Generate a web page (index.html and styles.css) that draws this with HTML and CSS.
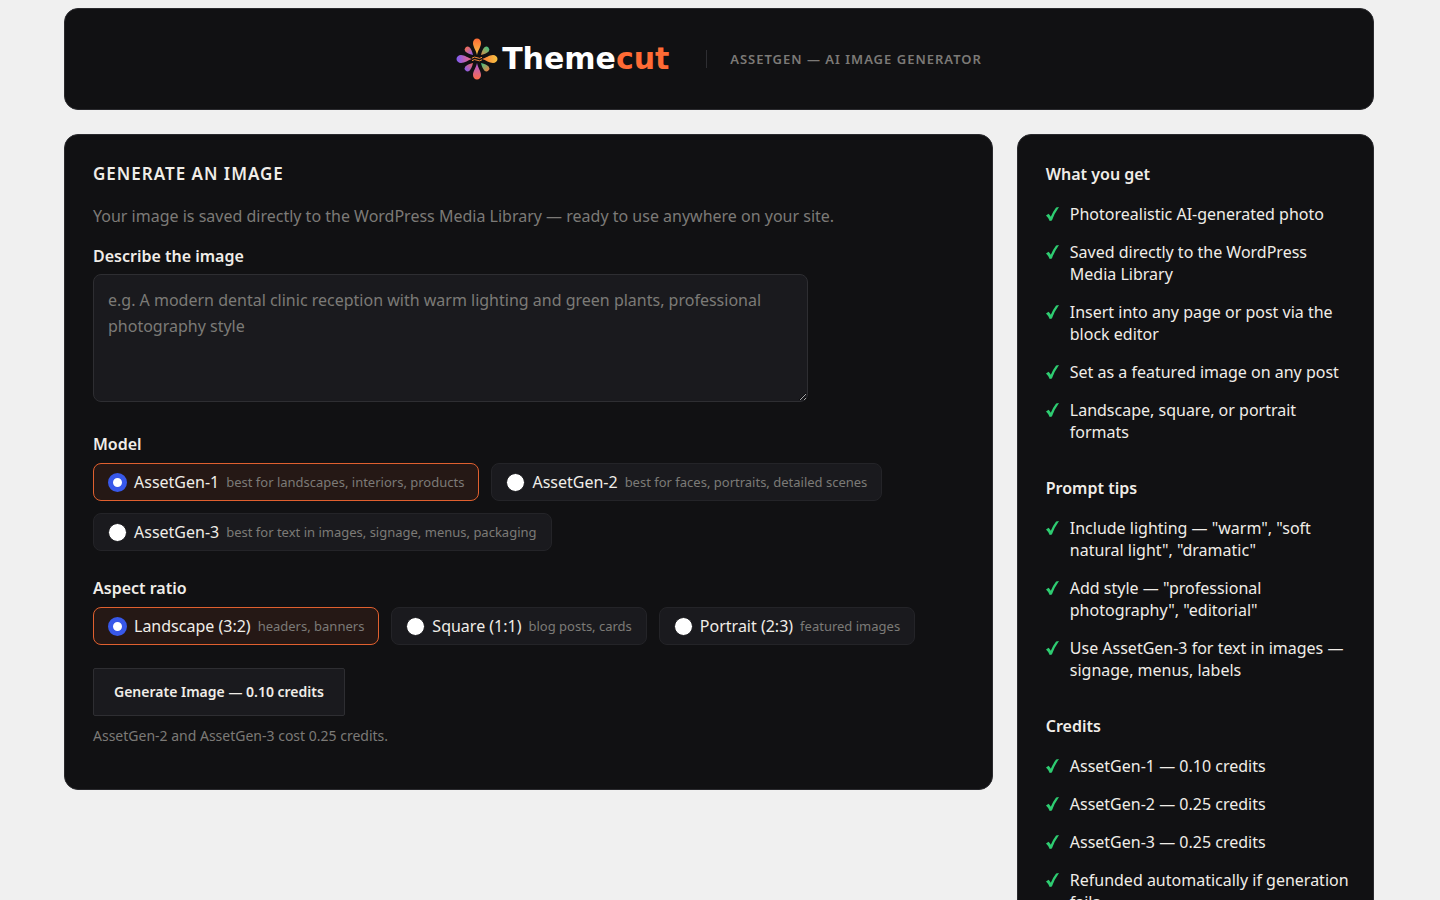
FILE: index.html
```html
<!DOCTYPE html>
<html lang="en">
<head>
    <meta charset="UTF-8">
    <meta name="viewport" content="width=device-width, initial-scale=1.0">
    <title>AssetGen — AI Image Generator</title>
    <link rel="stylesheet" href="styles.css">
</head>
<body>
    <svg class="sprite" aria-hidden="true">
        <symbol id="check" viewBox="0 0 13 14">
            <path d="M0 8.500 L2.600 6.700 Q4 8.200 4.800 9.800 Q7.200 4.300 10.100 0.600 L13 0 Q8.400 6.400 5.900 13.400 L3.700 14 Q2.400 10.600 0 8.500 Z" fill="currentColor"/>
        </symbol>
    </svg>

    <div class="page">
        <header class="card header">
            <div class="brand">
                <svg class="brand-mark" viewBox="0 0 42 42" aria-hidden="true">
                    <defs>
                        <linearGradient id="top" x1="0" y1="0" x2="0" y2="1"><stop offset="0" stop-color="#ff6b35"/><stop offset="1" stop-color="#f7c548"/></linearGradient>
                        <linearGradient id="right" x1="0" y1="0" x2="1" y2="0"><stop offset="0" stop-color="#ff7a38"/><stop offset="1" stop-color="#f5c342"/></linearGradient>
                        <linearGradient id="bottom" x1="0" y1="0" x2="0" y2="1"><stop offset="0" stop-color="#a85be0"/><stop offset="1" stop-color="#ff6b45"/></linearGradient>
                        <linearGradient id="left" x1="0" y1="0" x2="1" y2="0"><stop offset="0" stop-color="#7f5cf5"/><stop offset="1" stop-color="#f0697a"/></linearGradient>
                        <linearGradient id="green" x1="1" y1="0" x2="0" y2="1"><stop offset="0" stop-color="#35c987"/><stop offset="1" stop-color="#e08a45"/></linearGradient>
                        <linearGradient id="violet" x1="0" y1="0" x2="1" y2="1"><stop offset="0" stop-color="#ff7040"/><stop offset="1" stop-color="#8a5cf0"/></linearGradient>
                        <linearGradient id="plum" x1="0" y1="1" x2="1" y2="0"><stop offset="0" stop-color="#7f5cf5"/><stop offset="1" stop-color="#ef6a60"/></linearGradient>
                        <linearGradient id="moss" x1="0" y1="0" x2="1" y2="1"><stop offset="0" stop-color="#35c987"/><stop offset="1" stop-color="#ff7a3c"/></linearGradient>
                    </defs>
                    <path fill="url(#top)" d="M21 17 C20 12 17 9 17 5 A4 4.5 0 0 1 25 5 C25 9 22 12 21 17Z"/>
                    <path fill="url(#bottom)" d="M21 25 C20 30 17 33 17 37 A4 4.5 0 0 0 25 37 C25 33 22 30 21 25Z"/>
                    <path fill="url(#left)" d="M16 21 C12 22 9 25 5 25 A4.5 4 0 0 1 5 17 C9 17 12 20 16 21Z"/>
                    <path fill="url(#right)" d="M26 21 C30 22 33 25 37 25 A4.5 4 0 0 0 37 17 C33 17 30 20 26 21Z"/>
                    <path fill="url(#violet)" d="M17 17 C16 13 15 11 13.500 9.300 A3 3 0 0 0 9.300 13.500 C11 15 13 16 17 17Z"/>
                    <path fill="url(#green)" d="M25 17 C26 13 27 11 28.500 9.300 A3 3 0 0 1 32.700 13.500 C31 15 29 16 25 17Z"/>
                    <path fill="url(#plum)" d="M17 25 C13 26 11 27 9.300 28.500 A3 3 0 0 0 13.500 32.700 C15 31 16 29 17 25Z"/>
                    <path fill="url(#moss)" d="M25 25 C29 26 31 27 32.700 28.500 A3 3 0 0 1 28.500 32.700 C27 31 26 29 25 25Z"/>
                    <path fill="none" stroke="#f08a3c" stroke-width="1" d="M16 20.200 Q18.500 18.200 21 19.700 T26 19.300 M16 22.700 Q18.500 20.700 21 22.200 T26 21.800"/>
                </svg>
                <span class="brand-name">Theme<span class="accent">cut</span></span>
            </div>
            <span class="tagline">AssetGen — AI Image Generator</span>
        </header>

        <div class="columns">
            <main class="card">
                <h1 class="title">Generate an image</h1>
                <p class="intro">Your image is saved directly to the WordPress Media Library — ready to use anywhere on your site.</p>

                <form>
                    <label class="field-label" for="prompt">Describe the image</label>
                    <textarea class="prompt" id="prompt" placeholder="e.g. A modern dental clinic reception with warm lighting and green plants, professional photography style"></textarea>

                    <fieldset class="group">
                        <legend class="field-label">Model</legend>
                        <div class="options">
                            <label class="option">
                                <input type="radio" name="model" value="1" checked>
                                <span>AssetGen-1</span>
                                <small>best for landscapes, interiors, products</small>
                            </label>
                            <label class="option">
                                <input type="radio" name="model" value="2">
                                <span>AssetGen-2</span>
                                <small>best for faces, portraits, detailed scenes</small>
                            </label>
                            <label class="option">
                                <input type="radio" name="model" value="3">
                                <span>AssetGen-3</span>
                                <small>best for text in images, signage, menus, packaging</small>
                            </label>
                        </div>
                    </fieldset>

                    <fieldset class="group">
                        <legend class="field-label">Aspect ratio</legend>
                        <div class="options">
                            <label class="option">
                                <input type="radio" name="ratio" value="3:2" checked>
                                <span>Landscape (3:2)</span>
                                <small>headers, banners</small>
                            </label>
                            <label class="option">
                                <input type="radio" name="ratio" value="1:1">
                                <span>Square (1:1)</span>
                                <small>blog posts, cards</small>
                            </label>
                            <label class="option">
                                <input type="radio" name="ratio" value="2:3">
                                <span>Portrait (2:3)</span>
                                <small>featured images</small>
                            </label>
                        </div>
                    </fieldset>

                    <button class="submit" type="submit">Generate Image — 0.10 credits</button>
                    <p class="note">AssetGen-2 and AssetGen-3 cost 0.25 credits.</p>
                </form>
            </main>

            <aside class="card sidebar">
                <h2>What you get</h2>
                <ul>
                    <li><svg><use href="#check"/></svg>Photorealistic AI-generated photo</li>
                    <li><svg><use href="#check"/></svg>Saved directly to the WordPress Media Library</li>
                    <li><svg><use href="#check"/></svg>Insert into any page or post via the block editor</li>
                    <li><svg><use href="#check"/></svg>Set as a featured image on any post</li>
                    <li><svg><use href="#check"/></svg>Landscape, square, or portrait formats</li>
                </ul>

                <h2>Prompt tips</h2>
                <ul>
                    <li><svg><use href="#check"/></svg>Include lighting — "warm", "soft natural light", "dramatic"</li>
                    <li><svg><use href="#check"/></svg>Add style — "professional photography", "editorial"</li>
                    <li><svg><use href="#check"/></svg>Use AssetGen-3 for text in images — signage, menus, labels</li>
                </ul>

                <h2>Credits</h2>
                <ul>
                    <li><svg><use href="#check"/></svg>AssetGen-1 — 0.10 credits</li>
                    <li><svg><use href="#check"/></svg>AssetGen-2 — 0.25 credits</li>
                    <li><svg><use href="#check"/></svg>AssetGen-3 — 0.25 credits</li>
                    <li><svg><use href="#check"/></svg>Refunded automatically if generation fails</li>
                </ul>
            </aside>
        </div>
    </div>
</body>
</html>
```

FILE: styles.css
```css
*, *::before, *::after {
    box-sizing: border-box;
}

html {
    scrollbar-width: none;
}

body {
    margin: 0;
    background: #f0f0f0;
    color: #f0ede8;
    font-family: "Segoe UI", "Noto Sans", sans-serif;
    font-size: 16px;
    line-height: 22px;
}

.sprite {
    display: none;
}

.page {
    padding: 8px 66px 24px 64px;
}

.card {
    background: #111113;
    border: 1px solid #2a2a2e;
    border-radius: 14px;
    padding: 28px;
}

/* Header */
.header {
    display: flex;
    justify-content: center;
    align-items: center;
    gap: 24px;
    margin-bottom: 24px;
}

.brand {
    display: flex;
    align-items: center;
    gap: 4px;
    height: 44px;
}

.brand-mark {
    width: 42px;
    height: 42px;
}

.brand-name {
    width: 180px;
    color: #fff;
    font-family: "DejaVu Sans", sans-serif;
    font-size: 30px;
    font-weight: 700;
}

.accent {
    color: #ff6b35;
}

.tagline {
    border-left: 1px solid #2e2e32;
    padding-left: 23px;
    color: #7c7a77;
    font-size: 13px;
    font-weight: 600;
    line-height: 18px;
    letter-spacing: 1px;
    text-transform: uppercase;
}

/* Layout */
.columns {
    display: grid;
    grid-template-columns: 13fr 5fr;
    align-items: start;
    gap: 24px;
}

/* Form */
.title {
    margin: 0 0 20px;
    font-size: 17px;
    font-weight: 600;
    letter-spacing: 1px;
    text-transform: uppercase;
}

.intro {
    margin: 0 0 18px;
    color: #7c7a77;
}

.field-label {
    display: block;
    margin-bottom: 7px;
    padding: 0;
    font-weight: 600;
}

.prompt {
    display: block;
    width: 100%;
    max-width: 715px;
    height: 128px;
    padding: 12px 14px;
    background: #1a1a1e;
    border: 1px solid #2e2e32;
    border-radius: 8px;
    color: #f0ede8;
    font: inherit;
    line-height: 26px;
    resize: vertical;
}

.prompt::placeholder {
    color: #7c7a77;
}

.group {
    min-width: 0;
    margin: 31px 0 0;
    padding: 0;
    border: 0;
}

.group + .group {
    margin-top: 26px;
}

.group .field-label {
    margin-bottom: 8px;
}

.options {
    display: flex;
    flex-wrap: wrap;
    gap: 12px;
}

.option {
    display: flex;
    align-items: center;
    gap: 7px;
    height: 38px;
    padding: 0 14px;
    background: #1a1a1e;
    border: 1px solid #242428;
    border-radius: 8px;
    cursor: pointer;
}

.option:has(input:checked) {
    background: #251815;
    border-color: #e0602f;
}

.option input {
    appearance: none;
    width: 19px;
    height: 19px;
    margin: 0;
    background: #fff;
    border: 1px solid #1a1a1e;
    border-radius: 50%;
}

.option input:checked {
    border: 5px solid #3858e9;
}

.option small {
    color: #7c7a77;
    font-size: 13px;
}

.submit {
    display: block;
    height: 48px;
    margin-top: 23px;
    padding: 0 20px;
    background: #1a1a1e;
    border: 1px solid #2e2e32;
    border-radius: 2px;
    color: #f0ede8;
    font: inherit;
    font-size: 14px;
    font-weight: 600;
    cursor: pointer;
}

.note {
    margin: 9px 0 14px;
    color: #7c7a77;
    font-size: 14px;
}

/* Sidebar */
.sidebar {
    padding-right: 22px;
}

.sidebar h2 {
    margin: 0 0 18px;
    font-size: 16px;
    font-weight: 600;
}

.sidebar ul {
    display: grid;
    gap: 16px;
    margin: 0 0 34px;
    padding: 0;
    list-style: none;
}

.sidebar li {
    display: flex;
    gap: 11px;
}

.sidebar li svg {
    flex: none;
    width: 13px;
    height: 14px;
    margin-top: 4px;
    color: #2ecc71;
}
```
